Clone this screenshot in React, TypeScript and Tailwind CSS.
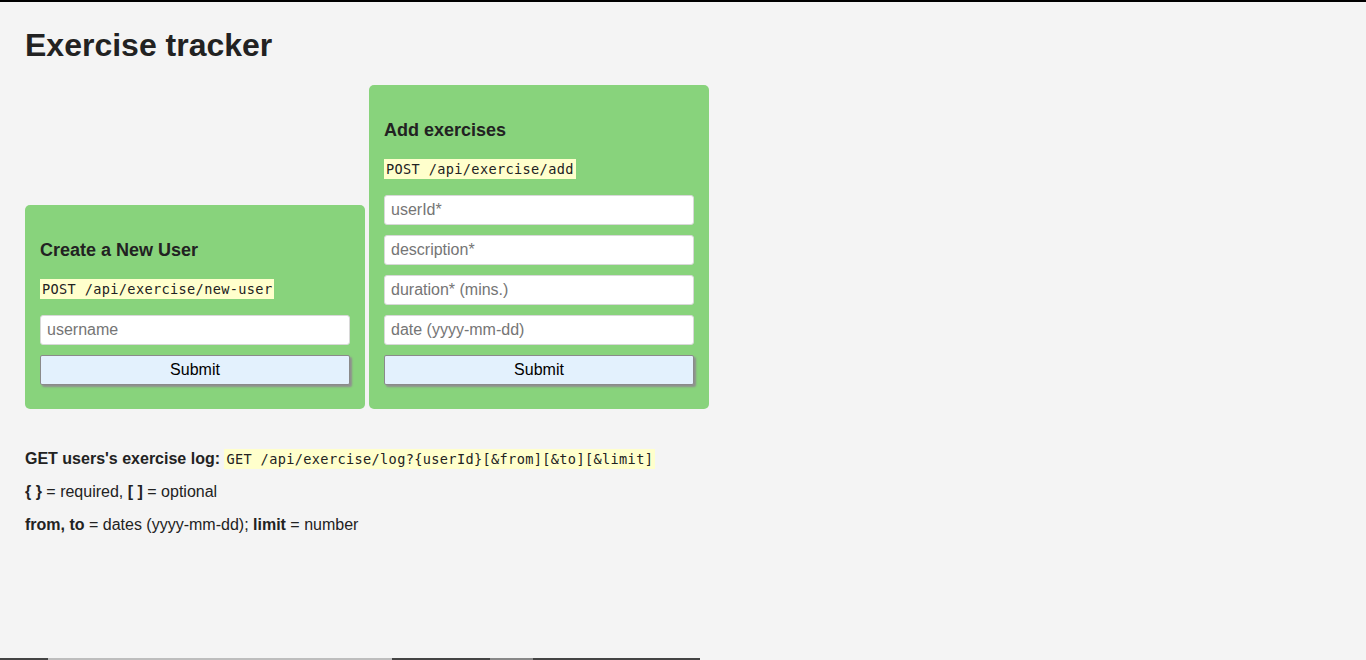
import React from "react";

const mono = "font-['DejaVu_Sans_Mono','Liberation_Mono',monospace]";

function Code({ children }: { children: React.ReactNode }) {
  return (
    <code className={`${mono} inline-block h-[20px] leading-[20px] px-[2px] bg-[#ffffcc] text-[13.6px] tracking-[0.35px] text-[#222] align-top`}>
      {children}
    </code>
  );
}

function Input({ placeholder }: { placeholder: string }) {
  return (
    <input
      placeholder={placeholder}
      className="block w-full h-[30px] mb-[10px] px-[6px] bg-white border border-[#d8d8d8] rounded-[3px] text-[16px] text-[#222] placeholder:text-[#757575] outline-none font-['Liberation_Sans',Arial,sans-serif]"
    />
  );
}

function Button() {
  return (
    <button className="block w-full h-[30px] mb-[9px] bg-[#e3f1fd] border border-[#8a8a8a] rounded-[2px] shadow-[2px_2px_2px_#8f8f8f] text-[16px] text-black font-['Liberation_Sans',Arial,sans-serif]">
      Submit
    </button>
  );
}

function Card({ title, endpoint, fields }: { title: string; endpoint: string; fields: string[] }) {
  return (
    <div className="w-[340px] p-[15px] rounded-[5px] bg-[#88d37c]">
      <h3 className="mt-[20px] mb-[18px] text-[18px] leading-[21px] font-bold text-[#222]">{title}</h3>
      <p className="mt-[2px] mb-[16px] h-[20px] leading-[20px]">
        <Code>{endpoint}</Code>
      </p>
      {fields.map((f) => (
        <Input key={f} placeholder={f} />
      ))}
      <Button />
    </div>
  );
}

export default function App() {
  return (
    <div className="min-h-[660px] flex flex-col bg-[#f4f4f4] border-t-2 border-black font-['Liberation_Sans',Arial,sans-serif] text-[#222]">
      <div className="px-[25px]">
        <h1 className="pt-[25px] mb-[21px] text-[32px] leading-[37px] font-bold text-[#222]">Exercise tracker</h1>
        <div className="flex items-end gap-[4px]">
          <Card title="Create a New User" endpoint="POST /api/exercise/new-user" fields={["username"]} />
          <Card
            title="Add exercises"
            endpoint="POST /api/exercise/add"
            fields={["userId*", "description*", "duration* (mins.)", "date (yyyy-mm-dd)"]}
          />
        </div>
        <div className="mt-[40px] flex flex-col gap-[13px] text-[16px]">
          <p className="leading-[20px]">
            <b>GET users's exercise log:</b> <Code>GET /api/exercise/log?{"{userId}"}[&amp;from][&amp;to][&amp;limit]</Code>
          </p>
          <p className="leading-[20px]">
            <b>{"{ }"}</b> = required, <b>[ ]</b> = optional
          </p>
          <p className="leading-[20px]">
            <b>from, to</b> = dates (yyyy-mm-dd); <b>limit</b> = number
          </p>
        </div>
      </div>
      <div className="mt-auto flex h-[2px]">
        <div className="w-[48px] bg-[#444]" />
        <div className="w-[344px] bg-[#bdbdbd]" />
        <div className="w-[98px] bg-[#444]" />
        <div className="w-[43px] bg-[#888]" />
        <div className="w-[167px] bg-[#444]" />
      </div>
    </div>
  );
}
